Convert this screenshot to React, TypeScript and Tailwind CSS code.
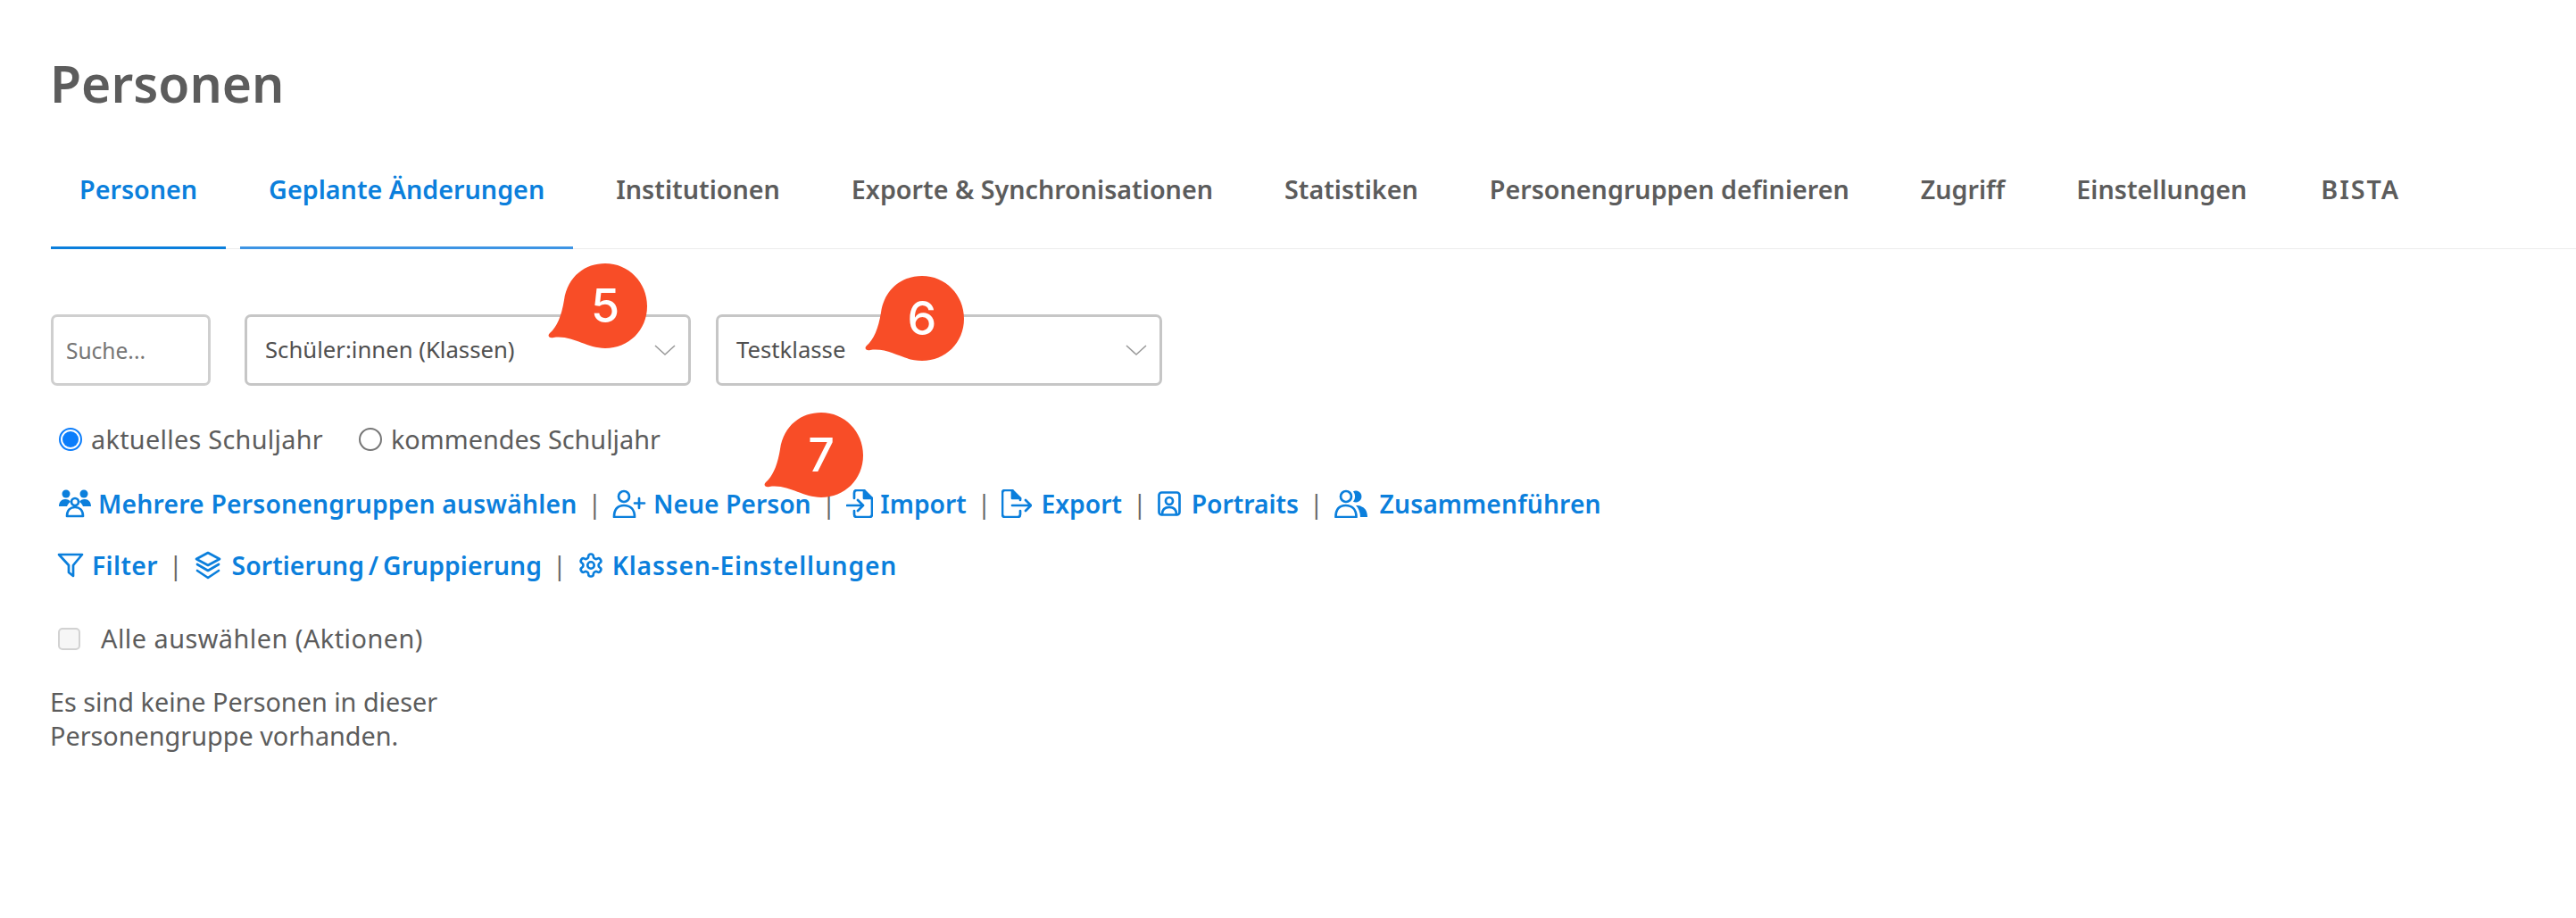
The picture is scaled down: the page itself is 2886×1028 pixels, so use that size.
import React from "react";

const tabs = [
  "Personen",
  "Geplante Änderungen",
  "Institutionen",
  "Exporte & Synchronisationen",
  "Statistiken",
  "Personengruppen definieren",
  "Zugriff",
  "Einstellungen",
  "BISTA",
];

function Chevron() {
  return (
    <svg width="26" height="14" viewBox="0 0 26 14" fill="none" stroke="#9a9a9a" strokeWidth="1.6">
      <path d="M2 2l11 10L24 2" />
    </svg>
  );
}

function Bubble({ n, className }: { n: number; className: string }) {
  return (
    <div className={"absolute w-[112px] h-[97px] " + className}>
      <svg width="112" height="97" viewBox="0 0 112 97" fill="#f84d27">
        <path d="M2 79C10 72 15 60 18 42C22 15 42 1 64 1C90 1 111 22 111 49C111 76 90 96 64 96C42 96 28 81 6 84C1 85-1 82 2 79Z" />
      </svg>
      <span className="absolute left-[24px] top-[18px] w-[80px] text-center text-[52px] leading-[62px] font-medium text-white font-['Inter',sans-serif]">
        {n}
      </span>
    </div>
  );
}

const iconProps = {
  fill: "none",
  stroke: "#0b7fdc",
  strokeWidth: 2.7,
  strokeLinecap: "round" as const,
  strokeLinejoin: "round" as const,
};

function GroupIcon() {
  return (
    <svg width="38" height="32" viewBox="0 0 38 32">
      <g fill="#0b7fdc">
        <circle cx="9" cy="5" r="4.5" />
        <circle cx="29" cy="5" r="4.5" />
        <path d="M1 19c0-5 3-8 7-8 3 0 5 1 6 3-2 1-3 3-4 5z" />
        <path d="M37 19c0-5-3-8-7-8-3 0-5 1-6 3 2 1 3 3 4 5z" />
      </g>
      <circle cx="19" cy="14" r="4" {...iconProps} />
      <path d="M10 30c0-7 4-10 9-10s9 3 9 10z" {...iconProps} />
    </svg>
  );
}

function UserPlusIcon() {
  return (
    <svg width="38" height="32" viewBox="0 0 38 32" {...iconProps}>
      <circle cx="13" cy="8" r="6" />
      <path d="M2 31c0-9 4-13 11-13s12 4 12 13z" />
      <path d="M30 10v11M25 15.500h11" />
    </svg>
  );
}

function ImportIcon() {
  return (
    <svg width="30" height="32" viewBox="0 0 30 32" {...iconProps}>
      <path d="M9 10V4c0-2 1-3 3-3h8l9 9v18c0 2-1 3-3 3H12c-2 0-3-1-3-3v-4" />
      <path d="M20 1v9h9" fill="#0b7fdc" />
      <path d="M1 18h18M13 12l6 6-6 6" />
    </svg>
  );
}

function ExportIcon() {
  return (
    <svg width="34" height="32" viewBox="0 0 34 32" {...iconProps}>
      <path d="M21 12v-2l-9-9H4C2 1 1 2 1 4v24c0 2 1 3 3 3h14c2 0 3-1 3-3v-4" />
      <path d="M12 1v9h9" fill="#0b7fdc" />
      <path d="M12 18h21M27 12l6 6-6 6" />
    </svg>
  );
}

function PortraitIcon() {
  return (
    <svg width="26" height="28" viewBox="0 0 26 28" {...iconProps}>
      <rect x="1.500" y="1.500" width="23" height="25" rx="3" />
      <circle cx="13" cy="11" r="4" />
      <path d="M5 26c0-6 3-8 8-8s8 2 8 8" />
    </svg>
  );
}

function MergeIcon() {
  return (
    <svg width="37" height="32" viewBox="0 0 37 32">
      <path d="M21 2.200a6.500 6.500 0 1 1 0 11.600a9 9 0 0 0 0-11.600z" fill="#0b7fdc" />
      <path d="M24 18c8 0 13 4 13 13H29c0-5-2-10-5-13z" fill="#0b7fdc" />
      <circle cx="13" cy="8" r="6" {...iconProps} />
      <path d="M1.500 31c0-9 4-13 11-13s12 4 12 13z" {...iconProps} />
    </svg>
  );
}

function FilterIcon() {
  return (
    <svg width="30" height="28" viewBox="0 0 30 28" {...iconProps}>
      <path d="M2 2h26L18 14v12l-5-4v-8z" />
    </svg>
  );
}

function LayersIcon() {
  return (
    <svg width="32" height="32" viewBox="0 0 32 32" {...iconProps}>
      <path d="M16 2l13 7-13 7-13-7z" />
      <path d="M4 15l12 7 12-7" />
      <path d="M4 22l12 8 12-8" />
    </svg>
  );
}

function GearIcon() {
  return (
    <svg width="30" height="30" viewBox="0 0 24 24" fill="none" stroke="#0b7fdc" strokeWidth="2.100" strokeLinecap="round" strokeLinejoin="round">
      <path d="M12.220 2h-.44a2 2 0 0 0-2 2v.18a2 2 0 0 1-1 1.730l-.43.250a2 2 0 0 1-2 0l-.15-.080a2 2 0 0 0-2.730.730l-.22.380a2 2 0 0 0 .730 2.730l.15.100a2 2 0 0 1 1 1.720v.510a2 2 0 0 1-1 1.740l-.15.090a2 2 0 0 0-.730 2.730l.22.380a2 2 0 0 0 2.730.730l.15-.080a2 2 0 0 1 2 0l.43.250a2 2 0 0 1 1 1.730V20a2 2 0 0 0 2 2h.44a2 2 0 0 0 2-2v-.18a2 2 0 0 1 1-1.730l.43-.250a2 2 0 0 1 2 0l.15.080a2 2 0 0 0 2.730-.730l.22-.390a2 2 0 0 0-.730-2.730l-.15-.080a2 2 0 0 1-1-1.740v-.500a2 2 0 0 1 1-1.740l.15-.090a2 2 0 0 0 .730-2.730l-.22-.380a2 2 0 0 0-2.730-.730l-.15.080a2 2 0 0 1-2 0l-.43-.250a2 2 0 0 1-1-1.730V4a2 2 0 0 0-2-2z" />
      <circle cx="12" cy="12" r="3" />
    </svg>
  );
}

function ActionLink({ icon, label, iconClass, labelClass }: { icon: React.ReactNode; label: string; iconClass: string; labelClass?: string }) {
  return (
    <a className="flex items-center text-[#0b7fdc] font-semibold whitespace-nowrap">
      <span className={"flex items-center " + iconClass}>{icon}</span>
      <span className={labelClass}>{label}</span>
    </a>
  );
}

function Sep() {
  return <span className="mx-[12px] text-[#666] font-normal">|</span>;
}

export default function App() {
  return (
    <main className="relative w-[2886px] h-[1028px] bg-white text-[#5c5c5c] font-['Noto_Sans',sans-serif] overflow-hidden">
      <div className="pl-[57px] pt-[55px]">
        <h1 className="text-[57px] leading-[76px] font-semibold -ml-px">Personen</h1>

        <nav className="flex gap-4 mt-[38px] border-b border-[#ececec]">
          {tabs.map((t, i) => (
            <a
              key={t}
              className={
                "px-[32px] pt-[23px] pb-[44px] text-[28.700px] leading-[40px] font-semibold whitespace-nowrap border-b-[3px] -mb-px " +
                (i === 0
                  ? "border-[#0b7fdc] text-[#0b7fdc]"
                  : i === 1
                    ? "border-[#3d94e4] text-[#0b7fdc]"
                    : i === 8
                      ? "border-transparent ml-[3px] tracking-[2px]"
                      : "border-transparent")
              }
            >
              {t}
            </a>
          ))}
        </nav>

        <div className="flex items-center mt-[73px]">
          <input
            placeholder="Suche..."
            className="w-[179px] h-[80px] px-[14px] border-[3px] border-[#cfcfcf] rounded-[7px] text-[24.500px] placeholder:text-[#757575] outline-none"
          />
          <div className="ml-[38px] w-[500px] h-[80px] pl-[20px] pr-[13px] flex items-center justify-between border-[3px] border-[#c6c6c6] rounded-[7px] text-[25.700px] text-[#4f4f4f]">
            Schüler:innen (Klassen)
            <Chevron />
          </div>
          <div className="ml-[28px] w-[500px] h-[80px] pl-[20px] pr-[13px] flex items-center justify-between border-[3px] border-[#c6c6c6] rounded-[7px] text-[25.700px] text-[#4f4f4f]">
            Testklasse
            <Chevron />
          </div>
        </div>

        <div className="flex items-center mt-[40px] ml-[9px] text-[28.800px] leading-[40px]">
          <span className="w-[26px] h-[26px] rounded-full border-[2px] border-[#0b7dfb] flex items-center justify-center">
            <span className="w-[18px] h-[18px] rounded-full bg-[#0b7dfb]" />
          </span>
          <span className="ml-[10px] tracking-[0.3px]">aktuelles Schuljahr</span>
          <span className="ml-[40px] w-[26px] h-[26px] rounded-full border-[2px] border-[#777]" />
          <span className="ml-[10px]">kommendes Schuljahr</span>
        </div>

        <div className="flex items-center mt-[32px] ml-[8px] text-[28.300px] leading-[40px]">
          <ActionLink icon={<GroupIcon />} label="Mehrere Personengruppen auswählen" iconClass="mr-[7px]" labelClass="tracking-[0.2px]" />
          <Sep />
          <ActionLink icon={<UserPlusIcon />} label="Neue Person" iconClass="mr-[8px]" />
          <Sep />
          <ActionLink icon={<ImportIcon />} label="Import" iconClass="mr-[8px]" />
          <Sep />
          <ActionLink icon={<ExportIcon />} label="Export" iconClass="mr-[10px]" />
          <Sep />
          <ActionLink icon={<PortraitIcon />} label="Portraits" iconClass="mr-[12px]" />
          <Sep />
          <ActionLink icon={<MergeIcon />} label="Zusammenführen" iconClass="mr-[14px]" labelClass="tracking-[0.1px]" />
        </div>

        <div className="flex items-center mt-[29px] ml-[7px] text-[28.300px] leading-[40px]">
          <ActionLink icon={<FilterIcon />} label="Filter" iconClass="mr-[9px]" labelClass="tracking-[0.4px]" />
          <Sep />
          <ActionLink icon={<LayersIcon />} label={"Sortierung\u2009/\u2009Gruppierung"} iconClass="mr-[11px]" labelClass="tracking-[0.1px]" />
          <Sep />
          <ActionLink icon={<GearIcon />} label="Klassen-Einstellungen" iconClass="mr-[9px]" labelClass="tracking-[0.8px]" />
        </div>

        <div className="flex items-center mt-[42px] ml-[8px] text-[28.800px] leading-[40px] tracking-[0.5px]">
          <span className="w-[25px] h-[25px] rounded-[5px] border-[2px] border-[#d2d2d2] bg-[#f6f6f6]" />
          <span className="ml-[23px]">Alle auswählen (Aktionen)</span>
        </div>

        <p className="mt-[32px] w-[500px] text-[28.800px] leading-[38px] -ml-px">
          Es sind keine Personen in dieser Personengruppe vorhanden.
        </p>
      </div>

      <Bubble n={5} className="left-[614px] top-[294px]" />
      <Bubble n={6} className="left-[969px] top-[308px]" />
      <Bubble n={7} className="left-[856px] top-[461px]" />
    </main>
  );
}
